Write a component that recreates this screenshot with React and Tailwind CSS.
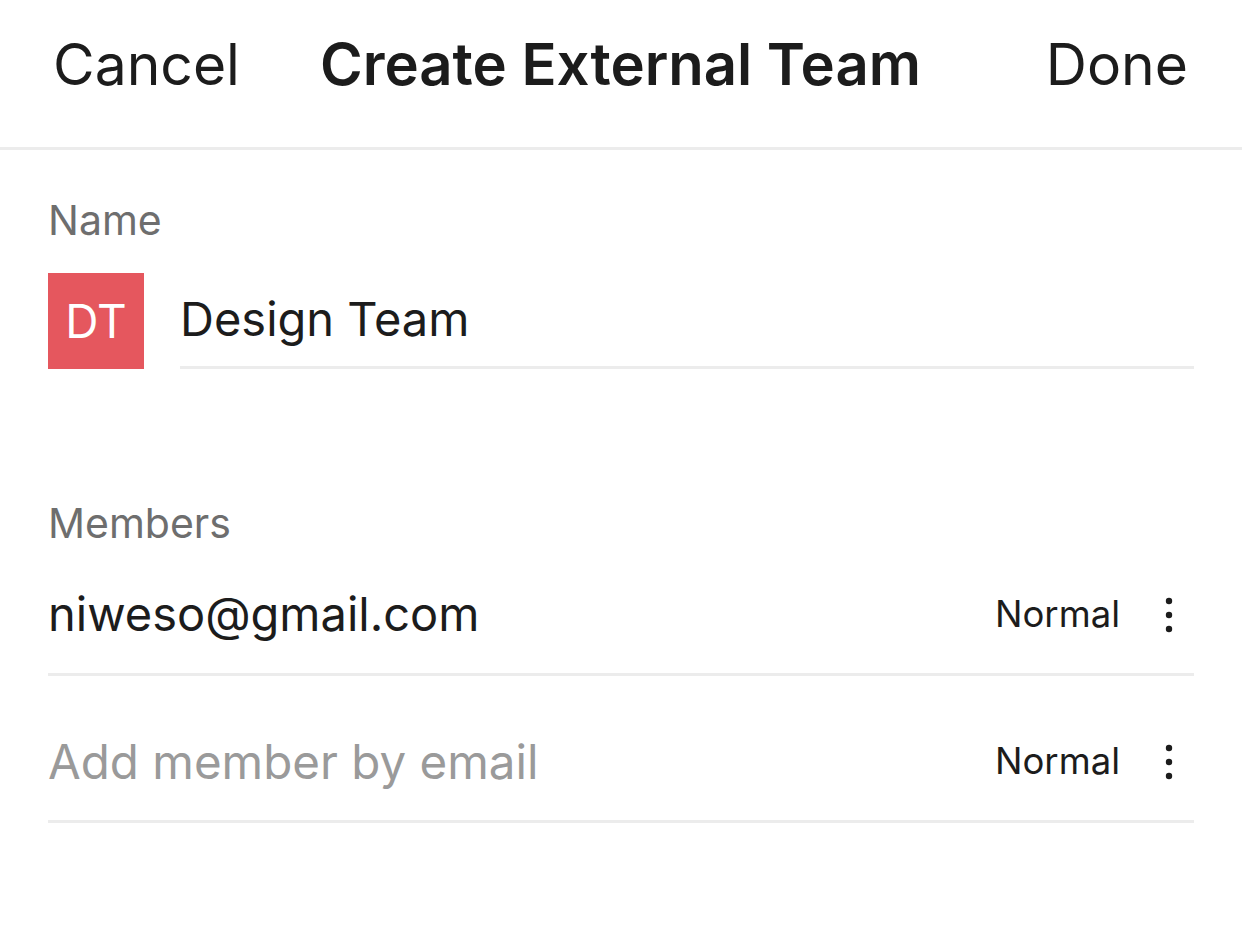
import React from "react";

function Dots() {
  return (
    <svg width="10" height="36" viewBox="0 0 10 36" className="text-[#1c1c1c]">
      <circle cx="5" cy="4" r="3.2" fill="currentColor" />
      <circle cx="5" cy="18" r="3.2" fill="currentColor" />
      <circle cx="5" cy="32" r="3.2" fill="currentColor" />
    </svg>
  );
}

function MemberRow({ email, placeholder }) {
  return (
    <div className="flex items-center h-[120px] border-b-[3px] border-[#ececec]">
      <div className={`flex-1 ${placeholder ? "text-[47.5px] text-[#9a9a9a]" : "text-[47px] text-[#1c1c1c]"}`}>
        {email || placeholder}
      </div>
      <div className="text-[36.5px] text-[#1c1c1c] mr-[44px]">Normal</div>
      <div className="mr-[20px] flex items-center">
        <Dots />
      </div>
    </div>
  );
}

export default function App() {
  return (
    <div className="w-[1242px] h-[938px] bg-white font-['Inter','Noto_Sans',sans-serif] text-[#1c1c1c]">
      <div className="h-[150px] grid grid-cols-[1fr_auto_1fr] items-center pl-[53px] pr-[54px] border-b-[3px] border-[#ececec] pb-[18px]">
        <div className="text-[57px]">Cancel</div>
        <div className="text-[58px] font-semibold">Create External Team</div>
        <div className="text-[57px] text-right">Done</div>
      </div>

      <div className="px-[48px]">
        <div className="pt-[42px] text-[41px] text-[#6e6e6e] leading-[56px]">Name</div>
        <div className="flex items-start mt-[25px]">
          <div className="w-[96px] h-[96px] bg-[#e5575e] text-white text-[46px] flex items-center justify-center">
            DT
          </div>
          <div className="flex-1 ml-[36px] h-[96px] flex items-center border-b-[3px] border-[#ececec] text-[47px]">
            Design Team
          </div>
        </div>

        <div className="mt-[126px] text-[41px] text-[#6e6e6e] leading-[56px]">Members</div>
        <div className="mt-[5px]">
          <MemberRow email="niweso@gmail.com" />
          <div className="mt-[27px]">
            <MemberRow placeholder="Add member by email" />
          </div>
        </div>
      </div>
    </div>
  );
}
